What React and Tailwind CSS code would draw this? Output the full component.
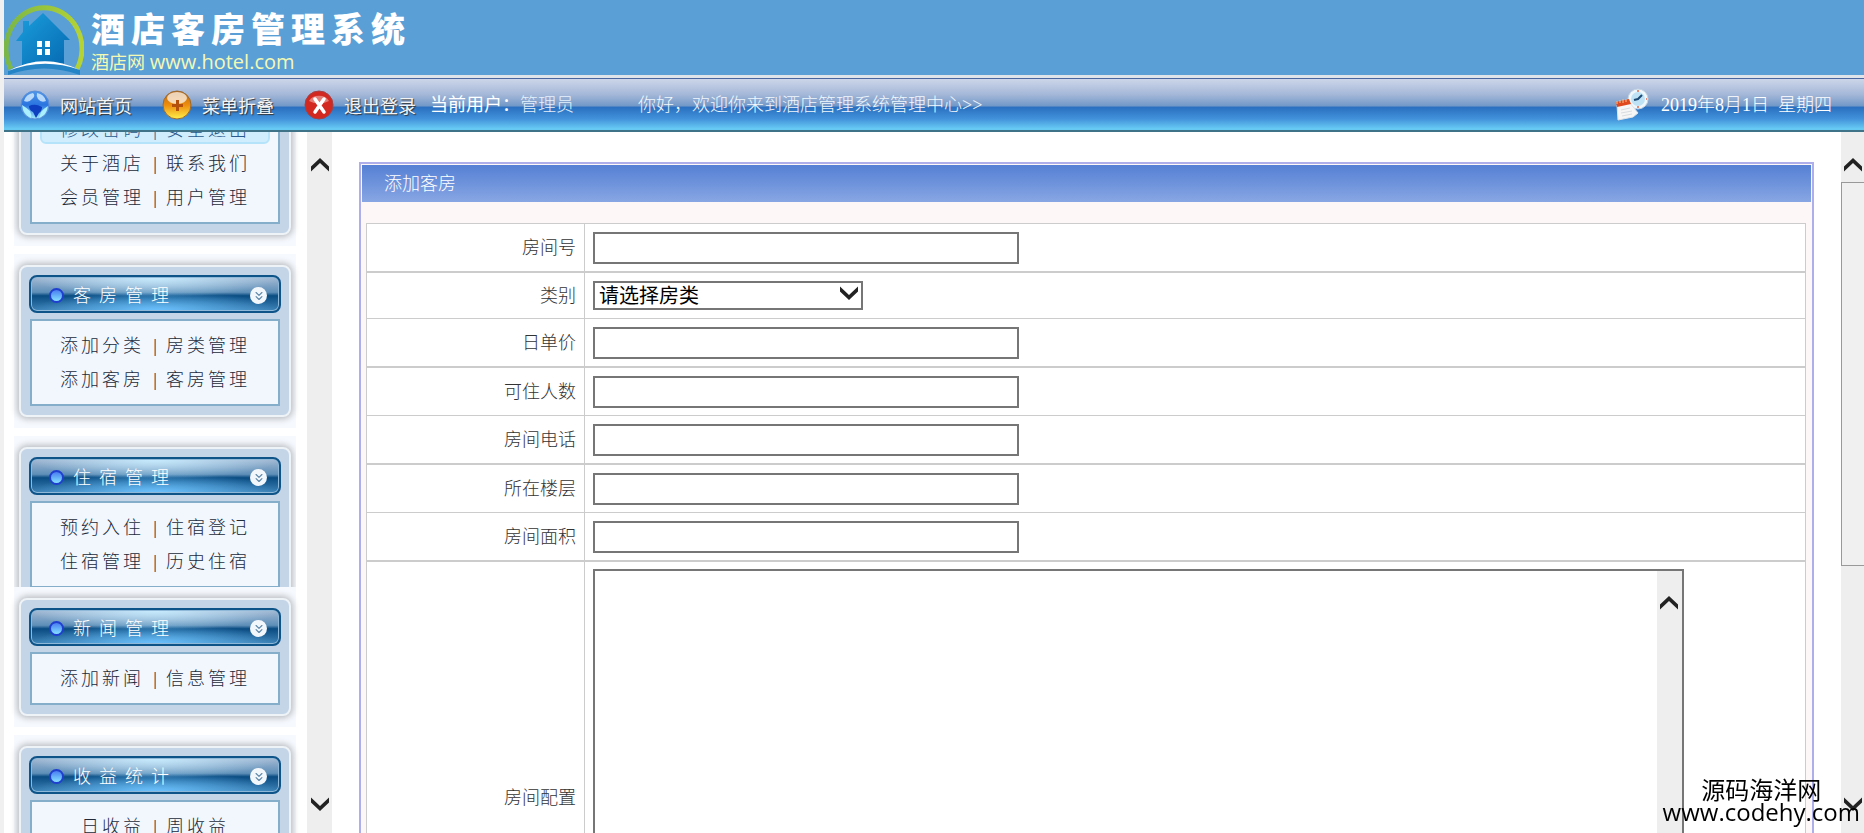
import { ChevronsDown } from 'lucide-react'

const menus = [
  {
    id: 'system',
    links: [
      ['修改密码', '安全退出'],
      ['关于酒店', '联系我们'],
      ['会员管理', '用户管理'],
    ],
    active: 0,
  },
  {
    id: 'rooms',
    title: '客房管理',
    links: [
      ['添加分类', '房类管理'],
      ['添加客房', '客房管理'],
    ],
  },
  {
    id: 'stay',
    title: '住宿管理',
    clipped: true,
    links: [
      ['预约入住', '住宿登记'],
      ['住宿管理', '历史住宿'],
    ],
  },
  { id: 'news', title: '新闻管理', links: [['添加新闻', '信息管理']] },
  { id: 'income', title: '收益统计', links: [['日收益', '周收益']] },
]

const fields = [
  { id: 'number', label: '房间号' },
  { id: 'category', label: '类别', type: 'select' },
  { id: 'price', label: '日单价' },
  { id: 'capacity', label: '可住人数' },
  { id: 'phone', label: '房间电话' },
  { id: 'floor', label: '所在楼层' },
  { id: 'area', label: '房间面积' },
  { id: 'config', label: '房间配置', type: 'textarea' },
]

function Arrow({ down }) {
  return (
    <svg className="w-[18px] h-[14px] shrink-0" viewBox="0 0 18 14" fill="#222">
      {down ? (
        <path d="M0 0.5L9 9L18 0.5V5.5L9 14L0 5.5z" />
      ) : (
        <path d="M0 13.5L9 5L18 13.5V8.5L9 0L0 8.5z" />
      )}
    </svg>
  )
}

function Logo() {
  return (
    <svg className="w-20 h-[75px] shrink-0" viewBox="0 0 80 75">
      <defs>
        <linearGradient id="ring" x1="0" x2="1">
          <stop offset="0" stopColor="#7ab648" />
          <stop offset="1" stopColor="#b5d334" />
        </linearGradient>
        <linearGradient id="house" x1="0" x2="1" y2="1">
          <stop offset="0" stopColor="#1b9fdd" />
          <stop offset="1" stopColor="#0568b0" />
        </linearGradient>
      </defs>
      <path d="M7 69A38 41 0 1 1 73 69" fill="none" stroke="url(#ring)" strokeWidth="5" />
      <path d="M19 21h6v5L39 13L66 40H60V66Q40 56 18 66V41H12L19 32z" fill="url(#house)" />
      <path d="M33 41h5v6h-5zM41 41h5v6h-5zM33 49h5v6h-5zM41 49h5v6h-5z" fill="#fff" />
      <path d="M4 71Q40 52 76 70L76 75Q40 62 4 75z" fill="#2584c6" />
      <path d="M4 71Q40 52 76 70Q40 57 4 71z" fill="#fff" />
    </svg>
  )
}

function GlobeIcon() {
  return (
    <svg className="w-[30px] h-[30px] shrink-0" viewBox="0 0 30 30">
      <defs>
        <linearGradient id="globe" x2="0" y2="1">
          <stop offset="0" stopColor="#4f97ea" />
          <stop offset="0.5" stopColor="#2a74e0" />
          <stop offset="1" stopColor="#9eeaff" />
        </linearGradient>
      </defs>
      <circle cx="15" cy="15" r="14" fill="url(#globe)" stroke="#5d8fd6" />
      <path d="M9 16q6-3 13 1 0 4-3 6l-3 5-3-6q-4-2-4-6z" fill="#0d3fc0" />
      <path d="M2 15q5 3 8 6 2 4 1 7-8-3-9-13zM28 16q-5 3-7 6l-2 6q8-3 9-12z" fill="#a9efff" />
      <path d="M4 11q2-7 9-8 3 3-1 6-3 4-8 2zM17 3q7 1 9 8-5 2-8-2-2-3-1-6z" fill="#d7edff" opacity="0.8" />
    </svg>
  )
}

function FoldIcon() {
  return (
    <svg className="w-[30px] h-[30px] shrink-0" viewBox="0 0 30 30">
      <defs>
        <linearGradient id="fold" x2="0" y2="1">
          <stop offset="0" stopColor="#b9640e" />
          <stop offset="0.5" stopColor="#ee8d0d" />
          <stop offset="1" stopColor="#fff04a" />
        </linearGradient>
      </defs>
      <circle cx="15" cy="15" r="14" fill="url(#fold)" stroke="#9a6a35" />
      <ellipse cx="15" cy="8" rx="10" ry="6" fill="#fff" opacity="0.7" />
      <path d="M14 10h3v4h4v3h-4v4h-3v-4h-4v-3h4z" fill="#b4500c" />
    </svg>
  )
}

function ExitIcon() {
  return (
    <svg className="w-[30px] h-[30px] shrink-0" viewBox="0 0 30 30">
      <circle cx="15" cy="15" r="14" fill="#d3281f" stroke="#a34247" />
      <path d="M5 11a11 9 0 0 1 20 0q-10 5-20 0z" fill="#f0b6b0" opacity="0.6" />
      <path d="M11 9l9 13M20 9L11 22" stroke="#fff" strokeWidth="3.5" strokeLinecap="round" />
    </svg>
  )
}

function CalendarIcon() {
  return (
    <svg className="w-[34px] h-[34px] shrink-0" viewBox="0 0 34 34">
      <circle cx="23" cy="11" r="10" fill="#f1f8fc" stroke="#c3d4e2" />
      <circle cx="23" cy="11" r="7" fill="#bfe3f5" />
      <path d="M27 7l-4 4-4 1" fill="none" stroke="#1d4b75" strokeWidth="2" />
      <path d="M22 3h2M31 11h1M22 19h2" stroke="#e58c74" strokeWidth="2" />
      <path d="M2 17l13-2 8 10-5 4-15 3z" fill="#f6f6f6" stroke="#dfe3e8" />
      <path d="M1 14l13-3 2 5-14 3z" fill="#e0491d" />
      <path d="M2 13v3M5 12v3M8 11v4M11 11v3" stroke="#f8c38c" />
      <path d="M6 22l9-2M6 25l11-2M7 28l10-2" stroke="#d9dcdf" />
    </svg>
  )
}

function NavLink({ icon, children }) {
  return (
    <a
      href="#"
      className="flex items-center gap-[10px] whitespace-nowrap text-lg text-[#f4f4f4] [text-shadow:1px_1px_1px_#333]"
    >
      {icon}
      {children}
    </a>
  )
}

function MenuCard({ menu }) {
  return (
    <section className={menu.clipped ? 'h-[151px] overflow-hidden' : 'mb-2'}>
      <div className="bg-[#f6f9fe] px-[5px] py-[11px]">
        <div className="rounded-lg border-2 border-[#eef3f8] bg-[#c4d5e8] px-2 pt-2 pb-[9px] shadow-[0_0_6px_2px_#b9bcc0]">
          {menu.title && (
            <button
              type="button"
              className="mb-[6px] flex h-[38px] w-full items-center rounded-lg border-2 border-[#0f5488] bg-[radial-gradient(ellipse_50%_60%_at_50%_100%,#6cc3ff,transparent),radial-gradient(ellipse_50%_60%_at_50%_0%,#c8ecff,transparent),linear-gradient(#a5b9d3,#5e8fb8_45%,#0a4c82_55%,#3f84b8)] pt-[3px] pr-3 pl-[18px] text-left text-lg font-light text-white shadow-[inset_0_0_0_1px_#8fb8d8]"
            >
              <span className="h-[15px] w-[15px] rounded-full border-2 border-[#1f3fd0] bg-linear-to-b from-[#4b7cf0] to-[#86e0ff]" />
              <span className="ml-[9px] flex-1 tracking-[8px]">{menu.title}</span>
              <span className="flex h-[17px] w-[17px] items-center justify-center rounded-full bg-[#f2f7fc]">
                <ChevronsDown className="h-[14px] w-[14px] text-[#5d87a8]" />
              </span>
            </button>
          )}
          <ul className="mx-px border-2 border-[#84aeca] bg-[#f2f7fe] pt-2 pb-[7px]">
            {menu.links.map(([left, right], i) => (
              <li
                key={left}
                className={
                  i === menu.active
                    ? 'mx-2 my-[3px] flex h-[28px] items-center justify-center gap-2 rounded-md border-2 border-[#b5e3fa] bg-[#d0edfd] text-lg font-light text-[#2a5a8c]'
                    : 'mx-2 flex h-[34px] items-center justify-center gap-2 text-lg font-light text-[#222a3a]'
                }
              >
                <a href="#" className="tracking-[3px]">{left}</a>
                <span className="w-[6px] text-center">|</span>
                <a href="#" className="tracking-[3px]">{right}</a>
              </li>
            ))}
          </ul>
        </div>
      </div>
    </section>
  )
}

function Field({ field }) {
  if (field.type === 'select') {
    return (
      <div className="relative w-[270px]">
        <select
          id={field.id}
          className="block h-[29px] w-full appearance-none border-2 border-[#767676] bg-white pl-1 text-xl leading-6 text-black"
        >
          <option>请选择房类</option>
        </select>
        <span className="pointer-events-none absolute top-[5px] right-[5px]">
          <Arrow down />
        </span>
      </div>
    )
  }
  if (field.type === 'textarea') {
    return (
      <div className="relative w-[90%]">
        <textarea
          id={field.id}
          className="block h-[458px] w-full resize-none overflow-hidden border-2 border-[#767676] bg-white pr-8 pl-1 text-lg"
        />
        <div className="absolute inset-y-[2px] right-[2px] flex w-[25px] justify-center bg-[#eee] pt-[25px]">
          <Arrow />
        </div>
      </div>
    )
  }
  return (
    <input
      id={field.id}
      type="text"
      className="block h-8 w-[426px] border-2 border-[#767676] bg-white px-1 text-lg"
    />
  )
}

function rowHeight(type) {
  if (type === 'select') return 'h-[45px]'
  if (type === 'textarea') return 'h-[472px]'
  return 'h-[47px]'
}

export default function App() {
  return (
    <div className="flex h-screen flex-col overflow-hidden border-l-4 border-[#f0f0f0] bg-white font-['Liberation_Serif','Noto_Sans_CJK_SC',sans-serif]">
      <header className="shrink-0">
        <div className="flex h-[75px] bg-[#5a9fd6]">
          <Logo />
          <div className="ml-[7px] flex flex-col font-['Open_Sans','Noto_Sans_CJK_SC',sans-serif]">
            <h1 className="mt-2 text-[34px] leading-[42px] font-black tracking-[6px] text-white">酒店客房管理系统</h1>
            <p className="text-lg leading-6 text-[#f4f9b4]">
              酒店网 <span className="text-xl leading-6">www.hotel.com</span>
            </p>
          </div>
        </div>
        <div className="h-1 border-b border-[#4a66a0] bg-[#dfe3ea]" />
        <nav className="flex h-[53px] items-center border-b-2 border-[#3f7388] bg-[linear-gradient(#cdd6e9,#a5b8d8_30%,#7298c8_53%,#2a6fc0_55%,#4191da_78%,#66c9f3_97%)] pl-4">
          <div className="flex gap-[30px] font-['Noto_Sans_CJK_SC',sans-serif]">
            <NavLink icon={<GlobeIcon />}>网站首页</NavLink>
            <NavLink icon={<FoldIcon />}>菜单折叠</NavLink>
            <NavLink icon={<ExitIcon />}>退出登录</NavLink>
          </div>
          <p className="ml-[14px] text-lg whitespace-nowrap text-white">
            当前用户：<span className="font-light text-[#e4f0fb]">管理员</span>
          </p>
          <p className="ml-16 text-lg font-light whitespace-nowrap text-[#f0f7fd]">
            你好，欢迎你来到酒店管理系统管理中心&gt;&gt;
          </p>
          <div className="mr-8 ml-auto flex items-center gap-3 text-lg font-light whitespace-nowrap text-white">
            <CalendarIcon />
            <time dateTime="2019-08-01" className="whitespace-pre">2019年8月1日  星期四</time>
          </div>
        </nav>
      </header>

      <div className="flex min-h-0 flex-1">
        <aside className="flex w-[328px] shrink-0 overflow-hidden">
          <div className="-mt-[50px] ml-[10px] w-[282px]">
            {menus.map((menu) => (
              <MenuCard key={menu.id} menu={menu} />
            ))}
          </div>
          <div className="ml-[11px] flex w-[25px] flex-col items-center justify-between bg-[#eee] pt-[26px] pb-[22px]">
            <Arrow />
            <Arrow down />
          </div>
        </aside>

        <main className="min-w-0 flex-1 overflow-hidden px-[27px] pt-[30px]">
          <div className="border-2 border-[#aeaeea] bg-[#fdf7f8]">
            <h2 className="m-px flex h-[37px] items-center bg-linear-to-b from-[#5580d4] to-[#88a6e3] pl-[22px] text-lg font-light text-white">
              添加客房
            </h2>
            <form className="mt-[21px] pr-[6px] pl-[5px]">
              <table className="w-full border-separate border-spacing-0 border border-b-0 border-[#ccc] bg-white">
                <tbody>
                  {fields.map((field, i) => (
                    <tr key={field.id}>
                      <th
                        className={`w-[218px] border-r border-[#ccc] pr-2 text-right text-lg leading-6 font-light text-[#333] ${i % 2 ? 'border-b' : 'border-b-2'}`}
                      >
                        <label htmlFor={field.id}>{field.label}</label>
                      </th>
                      <td className={`border-[#ccc] pl-2 ${i % 2 ? 'border-b' : 'border-b-2'}`}>
                        <div className={`flex items-center ${rowHeight(field.type)}`}>
                          <Field field={field} />
                        </div>
                      </td>
                    </tr>
                  ))}
                </tbody>
              </table>
            </form>
          </div>
        </main>

        <div className="flex w-[23px] shrink-0 flex-col items-center bg-[#eee] pt-[26px] pb-[22px]">
          <Arrow />
          <div className="mt-[10px] mb-auto h-[384px] w-full border border-r-0 border-[#999] bg-[#f0f0f0]" />
          <Arrow down />
        </div>
      </div>

      <div className="pointer-events-none fixed right-1 bottom-[10px] text-center font-['Open_Sans','Noto_Sans_CJK_SC',sans-serif] text-2xl leading-[22px] text-black">
        <p>源码海洋网</p>
        <p>www.codehy.com</p>
      </div>
    </div>
  )
}
